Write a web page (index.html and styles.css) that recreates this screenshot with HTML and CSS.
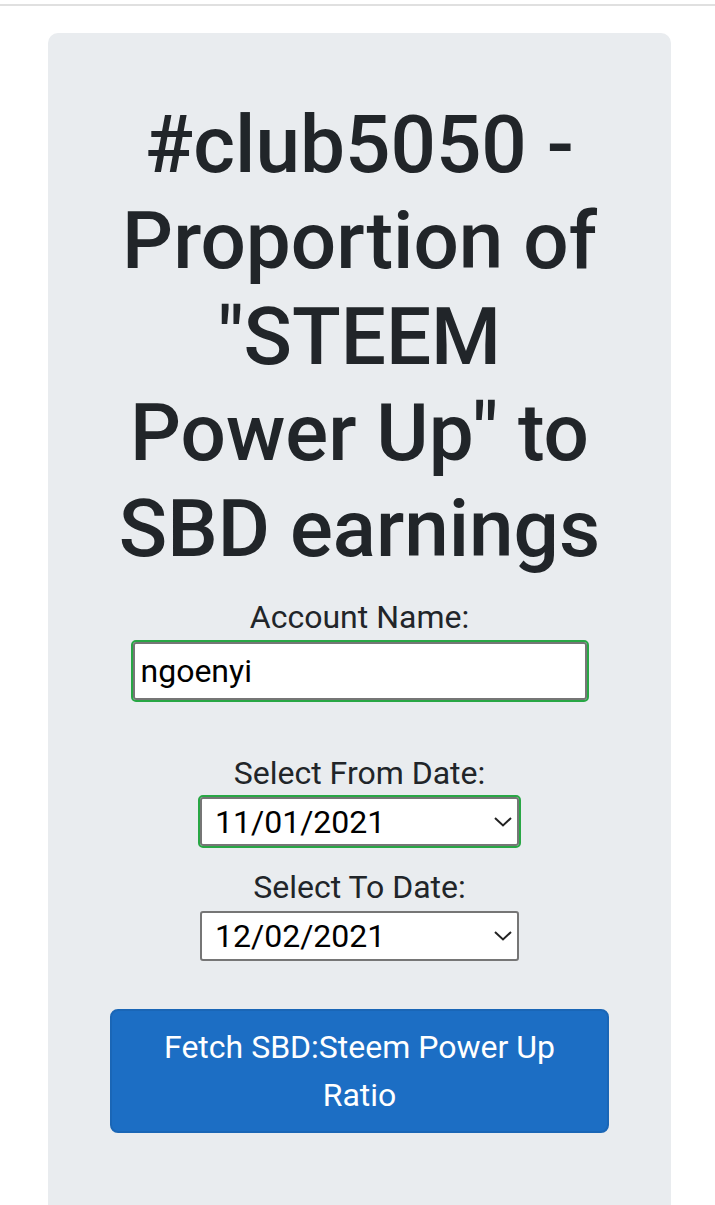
FILE: index.html
```html
<!DOCTYPE html>
<html lang="en">
<head>
<meta charset="utf-8">
<title>#club5050 - SBD to Steem Power Up ratio</title>
<link rel="stylesheet" href="styles.css">
</head>
<body>
<div class="topbar"></div>

<div class="jumbotron">
  <h1 class="title">#club5050 - Proportion of "STEEM Power Up" to SBD earnings</h1>

  <form class="query" onsubmit="return false;">
    <label for="account">Account Name:</label>
    <input type="text" id="account" class="field valid" value="ngoenyi">

    <label for="fromDate" class="gap">Select From Date:</label>
    <div class="select-wrap first">
      <select id="fromDate" class="field valid">
        <option>11/01/2021</option>
      </select>
      <svg class="chevron" width="18" height="10" viewBox="0 0 18 10"><path d="M1 1l8 7.5L17 1" fill="none" stroke="#222" stroke-width="2"/></svg>
    </div>

    <label for="toDate">Select To Date:</label>
    <div class="select-wrap">
      <select id="toDate" class="field">
        <option>12/02/2021</option>
      </select>
      <svg class="chevron" width="18" height="10" viewBox="0 0 18 10"><path d="M1 1l8 7.5L17 1" fill="none" stroke="#222" stroke-width="2"/></svg>
    </div>

    <button type="submit" class="btn-fetch">Fetch SBD:Steem Power Up Ratio</button>
  </form>
</div>
</body>
</html>
```

FILE: styles.css
```css
body { margin:0; background:#ffffff; font-family: Roboto, "Liberation Sans", sans-serif; color:#212529; }
.topbar { margin-top:4px; height:2px; background:#e0e0e0; }
.jumbotron { margin:27px 44px 0 48px; padding:64px 64px 72px; background:#e9ecef; border-radius:10px 10px 0 0; text-align:center; }
.title { margin:0 0 16px; font-size:80px; font-weight:500; line-height:96px; }
.query { display:flex; flex-direction:column; align-items:center; }
.query label { display:block; font-size:32px; line-height:48px; }
.query label.gap { margin-top:49px; }
.field { box-sizing:border-box; display:block; font-family: Roboto, "Liberation Sans", sans-serif; font-size:32px; color:#000; background:#fff; border:2px solid #767676; border-radius:3px; }
.field.valid { outline:2px solid #28a745; outline-offset:0; }
input.field { margin-top:1px; width:454px; height:58px; padding:0 6px; }
.select-wrap { position:relative; }
.select-wrap.first { margin-bottom:17px; }
select.field { -webkit-appearance:none; appearance:none; width:319px; height:50px; padding:0 40px 0 13px; }
#fromDate { height:49px; }
.chevron { position:absolute; right:7px; top:50%; margin-top:-5px; pointer-events:none; }
.btn-fetch { box-sizing:border-box; margin-top:48px; width:499px; padding:12px 24px; font-family: Roboto, "Liberation Sans", sans-serif; font-size:32px; line-height:48px; color:#fff; background:#1c6ec4; border:2px solid #1a66b6; border-radius:8px; }
```
